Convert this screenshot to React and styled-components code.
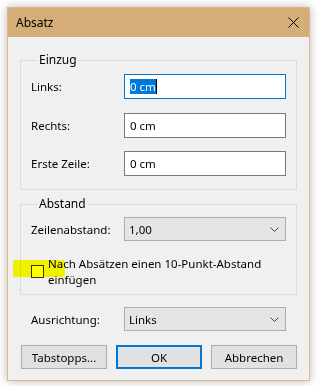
import React from "react";
import styled, { createGlobalStyle } from "styled-components";

const GlobalStyle = createGlobalStyle`
  body {
    margin: 0;
    background: #ffffff;
    font-family: "Segoe UI", "Noto Sans", sans-serif;
    font-size: 11.5px;
    color: #000000;
  }
`;

const App = () => {
  return (
    <>
      <GlobalStyle />
      <Window>
        <TitleBar>
          <Title>Absatz</Title>
          <CloseButton>
            <svg width="11" height="11" viewBox="0 0 11 11">
              <path d="M0.5 0.5 L10.5 10.5 M10.5 0.5 L0.5 10.5" stroke="#000" strokeWidth="1" />
            </svg>
          </CloseButton>
        </TitleBar>
        <Body>
          <Group>
            <Legend>Einzug</Legend>
            <Rows>
              <Row>
                <Label>Links:</Label>
                <Input focused>
                  <Selected>0 cm</Selected>
                  <Caret />
                </Input>
              </Row>
              <Row>
                <Label>Rechts:</Label>
                <Input>0 cm</Input>
              </Row>
              <Row>
                <Label>Erste Zeile:</Label>
                <Input>0 cm</Input>
              </Row>
            </Rows>
          </Group>

          <Group spaced>
            <Legend>Abstand</Legend>
            <Row>
              <Label>Zeilenabstand:</Label>
              <Combo>
                1,00
                <Chevron />
              </Combo>
            </Row>
            <CheckRow>
              <Highlight />
              <CheckBox />
              <CheckText>
                Nach Absätzen einen 10-Punkt-Abstand
                <br />
                einfügen
              </CheckText>
            </CheckRow>
          </Group>

          <AlignRow>
            <Label>Ausrichtung:</Label>
            <Combo>
              Links
              <Chevron />
            </Combo>
          </AlignRow>

          <Buttons>
            <Button>Tabstopps...</Button>
            <Button primary>OK</Button>
            <Button>Abbrechen</Button>
          </Buttons>
        </Body>
      </Window>
    </>
  );
};

const Chevron = () => (
  <ChevronIcon width="9" height="5" viewBox="0 0 9 5">
    <path d="M0.5 0.5 L4.5 4.5 L8.5 0.5" fill="none" stroke="#444" strokeWidth="1" />
  </ChevronIcon>
);

export default App;

const Window = styled.div`
  margin: 7px;
  width: 303px;
  height: 374px;
  box-sizing: border-box;
  border: 1px solid #dcb887;
  background: #f0f0f0;
  box-shadow: 0 0 9px rgba(0, 0, 0, 0.28);
  display: flex;
  flex-direction: column;
`;

const TitleBar = styled.div`
  height: 29px;
  flex-shrink: 0;
  background: #d5ad78;
  display: flex;
  align-items: center;
  justify-content: space-between;
  padding: 0 10px 0 8px;
`;

const Title = styled.div`
  font-size: 12px;
  color: #000;
  margin-top: -1px;
`;

const CloseButton = styled.div`
  display: flex;
  align-items: center;
  justify-content: center;
  width: 11px;
  height: 11px;
`;

const Body = styled.div`
  padding: 15px 12px 0 12px;
  display: flex;
  flex-direction: column;
`;

const Group = styled.fieldset`
  margin: ${(p) => (p.spaced ? "6px" : "0")} 0 0 0;
  border: 1px solid #dcdcdc;
  padding: ${(p) => (p.spaced ? "5px 10px 7px 10px" : "6px 10px 13px 10px")};
  min-width: 0;
`;

const Legend = styled.legend`
  padding: 0 2px;
  margin-left: 6px;
  line-height: 16px;
  font-size: 12px;
`;

const Rows = styled.div`
  display: flex;
  flex-direction: column;
  gap: 13.5px;
`;

const Row = styled.div`
  display: flex;
  align-items: center;
`;

const Label = styled.div`
  width: 93px;
  flex-shrink: 0;
`;

const Input = styled.div`
  box-sizing: border-box;
  width: 162px;
  height: 25px;
  background: #ffffff;
  border: 1px solid ${(p) => (p.focused ? "#0078d7" : "#7a7a7a")};
  padding-left: 5px;
  display: flex;
  align-items: center;
`;

const Selected = styled.span`
  background: #0078d7;
  color: #ffffff;
  line-height: 15px;
`;

const Caret = styled.span`
  width: 1px;
  height: 15px;
  background: #000;
`;

const Combo = styled.div`
  box-sizing: border-box;
  width: 162px;
  height: 24px;
  background: #e5e5e5;
  border: 1px solid #adadad;
  padding: 0 6px 0 4px;
  display: flex;
  align-items: center;
  justify-content: space-between;
`;

const ChevronIcon = styled.svg`
  display: block;
`;

const CheckRow = styled.div`
  position: relative;
  display: flex;
  align-items: center;
  gap: 4px;
  margin-top: 15px;
`;

const Highlight = styled.div`
  position: absolute;
  left: -18px;
  top: 4px;
  width: 52px;
  height: 17px;
  background: #ffff00;
  border-radius: 2px 3px 3px 1px;
  mix-blend-mode: multiply;
  pointer-events: none;
`;

const CheckBox = styled.div`
  box-sizing: border-box;
  width: 13px;
  height: 13px;
  flex-shrink: 0;
  border: 1px solid #333333;
  background: #ffffff;
`;

const CheckText = styled.div`
  line-height: 15.5px;
`;

const AlignRow = styled(Row)`
  margin-top: 12px;
  padding-left: 11px;
`;

const Buttons = styled.div`
  margin-top: 14px;
  padding-left: 1px;
  display: flex;
  justify-content: space-between;
`;

const Button = styled.div`
  box-sizing: border-box;
  width: 86px;
  height: 24px;
  background: #e1e1e1;
  border: ${(p) => (p.primary ? "2px solid #0078d7" : "1px solid #adadad")};
  display: flex;
  align-items: center;
  justify-content: center;
`;
